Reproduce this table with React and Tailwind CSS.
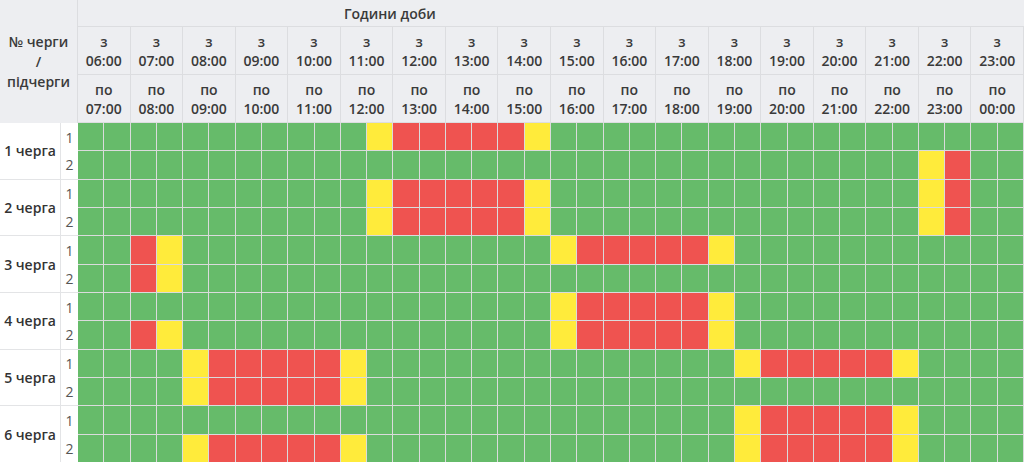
import React from 'react';

const HOURS = Array.from({ length: 18 }, (_, i) => i + 6);
const pad = (n) => String(n % 24).padStart(2, '0') + ':00';

// g = green, y = yellow, r = red; 36 half-hour cells from 06:00
const build = (marks) => {
  const row = Array(36).fill('g');
  Object.entries(marks).forEach(([k, v]) => {
    row[Number(k)] = v;
  });
  return row;
};

const block = (start, end) => {
  // yellow at start, red between, yellow at end
  const m = { [start]: 'y', [end]: 'y' };
  for (let i = start + 1; i < end; i++) m[i] = 'r';
  return m;
};

const QUEUES = [
  { name: '1 черга', rows: [build(block(11, 17)), build({ 32: 'y', 33: 'r' })] },
  {
    name: '2 черга',
    rows: [
      build({ ...block(11, 17), 32: 'y', 33: 'r' }),
      build({ ...block(11, 17), 32: 'y', 33: 'r' }),
    ],
  },
  {
    name: '3 черга',
    rows: [build({ 2: 'r', 3: 'y', ...block(18, 24) }), build({ 2: 'r', 3: 'y' })],
  },
  {
    name: '4 черга',
    rows: [build(block(18, 24)), build({ 2: 'r', 3: 'y', ...block(18, 24) })],
  },
  {
    name: '5 черга',
    rows: [build({ ...block(4, 10), ...block(25, 31) }), build(block(4, 10))],
  },
  {
    name: '6 черга',
    rows: [build(block(25, 31)), build({ ...block(4, 10), ...block(25, 31) })],
  },
];

const cellColor = {
  g: 'bg-[#66bb6a]',
  y: 'bg-[#ffeb3b]',
  r: 'bg-[#ef5350]',
};

const head = 'bg-[#edeef1] border-[#dcdde0] text-[#3a3a3a] font-semibold';

export default function App() {
  return (
    <div
      className="w-[1024px] h-[462px] overflow-hidden bg-white"
      style={{ fontFamily: '"Open Sans", "Noto Sans", sans-serif' }}
    >
      <div className="grid grid-cols-[61px_17px_repeat(36,minmax(0,1fr))] grid-rows-[27px_48px_48px_repeat(12,28.33px)] text-[14px]">
        <div
          className={`${head} col-span-2 row-span-3 border-r flex flex-col items-center justify-center leading-[20px] text-center`}
        >
          <span>№ черги</span>
          <span>/</span>
          <span>підчерги</span>
        </div>
        <div className={`${head} col-span-36 border-b flex items-center pl-[266px]`}>
          Години доби
        </div>

        {HOURS.map((h) => (
          <div
            key={`from-${h}`}
            className={`${head} col-span-2 border-r border-b flex flex-col items-center justify-center leading-[19px]`}
          >
            <span>з</span>
            <span>{pad(h)}</span>
          </div>
        ))}
        {HOURS.map((h) => (
          <div
            key={`to-${h}`}
            className={`${head} col-span-2 border-r border-b flex flex-col items-center justify-center leading-[19px]`}
          >
            <span>по</span>
            <span>{pad(h + 1)}</span>
          </div>
        ))}

        {QUEUES.map((q) => (
          <React.Fragment key={q.name}>
            <div className="row-span-2 border-r border-b border-[#e3e4e6] flex items-center justify-center font-semibold text-[#333]">
              {q.name}
            </div>
            {q.rows.map((row, ri) => (
              <React.Fragment key={ri}>
                {ri === 1 && null}
                <div
                  className={`col-start-2 flex items-center justify-center text-[#555] ${
                    ri === 1 ? 'border-b border-[#e3e4e6]' : ''
                  }`}
                >
                  {ri + 1}
                </div>
                {row.map((c, i) => (
                  <div
                    key={i}
                    className={`${cellColor[c]} border-r border-b border-[#dadbdc]`}
                  />
                ))}
              </React.Fragment>
            ))}
          </React.Fragment>
        ))}
      </div>
    </div>
  );
}
